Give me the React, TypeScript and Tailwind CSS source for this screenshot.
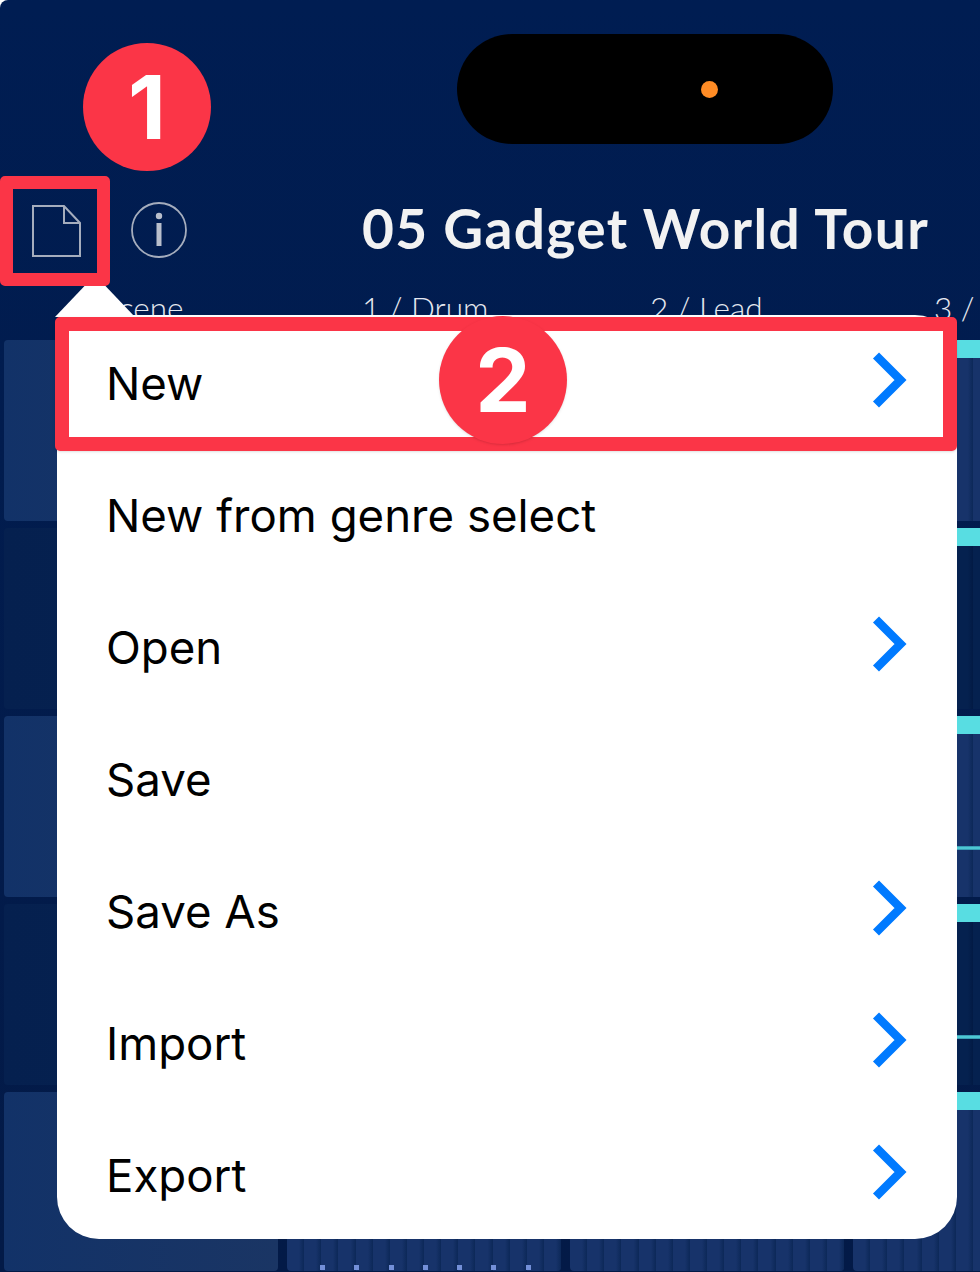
import React from "react";

const items = [
  { label: "New", arrow: true },
  { label: "New from genre select", arrow: false },
  { label: "Open", arrow: true },
  { label: "Save", arrow: false },
  { label: "Save As", arrow: true },
  { label: "Import", arrow: true },
  { label: "Export", arrow: true },
];

const stripes = Array.from({ length: 16 }, (_, i) => i);
const rows = [0, 1, 2, 3, 4];
const ticks = [0, 1, 2, 3, 4, 5, 6];

function Chevron() {
  return (
    <svg width="36" height="56" viewBox="0 0 36 56" className="mb-[5px]">
      <path d="M4 3.5 L28.5 28 L4 52.5" fill="none" stroke="#007aff" strokeWidth="8.5" />
    </svg>
  );
}

function Cell({ light, head, line, showTicks }: { light: boolean; head?: boolean; line?: number; showTicks?: boolean }) {
  return (
    <div className={`relative flex flex-col overflow-hidden rounded-[4px] ${light ? "bg-[#17336a]" : "bg-[#05214f]"}`}>
      {head && <div className="h-[18px] shrink-0 bg-[#58dde2]" />}
      <div className="flex flex-1">
        {stripes.map((s) => (
          <div
            key={s}
            className={`flex-1 bg-gradient-to-r from-transparent from-70% ${light ? "to-[#0c2858]" : "to-[#021a44]"}`}
          />
        ))}
      </div>
      {line !== undefined && (
        <div className="absolute left-0 right-0 h-[4px] bg-gradient-to-b from-[#2f8aa8] via-[#58dde2] to-[#2f8aa8]" style={{ top: line }} />
      )}
      {showTicks && (
        <div className="absolute bottom-[1px] left-0 right-0 flex h-[5px] gap-[29.3px] pl-[33px]">
          {ticks.map((t) => (
            <div key={t} className="h-[5px] w-[5px] bg-[#7490d8]" />
          ))}
        </div>
      )}
    </div>
  );
}

export default function App() {
  return (
    <div
      className="relative flex h-[1272px] w-[980px] flex-col overflow-hidden rounded-tl-lg bg-gradient-to-b from-[#001d52] to-[#031a47]"
      style={{ fontFamily: "Inter, sans-serif" }}
    >
      <header className="h-[296px] shrink-0">
        <div className="ml-[457px] mt-[34px] flex h-[110px] w-[376px] items-center rounded-full bg-black pl-[244px]">
          <div className="h-[17px] w-[17px] rounded-full bg-[#ff8c25]" />
        </div>
        <div className="mt-[58px] flex items-center">
          <svg width="51" height="54" viewBox="0 0 51 54" className="ml-[31px] mt-[2px]" fill="none" stroke="#a5adbd" strokeWidth="2">
            <path d="M2 2 H33 L49 19 V52 H2 Z" />
            <path d="M33 2 V19 H49" />
          </svg>
          <svg width="56" height="56" viewBox="0 0 56 56" className="ml-[49px]" fill="none">
            <circle cx="28" cy="28" r="27" stroke="#a5adbd" strokeWidth="1.8" />
            <circle cx="28" cy="14" r="3.2" fill="#b9bfcc" />
            <rect x="25.5" y="21" width="5" height="23" fill="#b9bfcc" />
          </svg>
          <h1
            className="-mt-[3px] ml-[175px] whitespace-nowrap text-[55px] font-bold leading-none tracking-[1.36px] text-[#f2f2f2]"
            style={{ fontFamily: "Lato, sans-serif" }}
          >
            05 Gadget World Tour
          </h1>
        </div>
      </header>

      <div
        className="-mt-[10px] mb-[10px] grid h-[44px] shrink-0 grid-cols-[287px_287px_285px_1fr] text-[31.5px] font-light leading-[44px] text-[#e6e9f0]"
        style={{ fontFamily: "Lato, sans-serif" }}
      >
        <span className="pl-[102px]">Scene</span>
        <span className="pl-[75px]">1 / Drum</span>
        <span className="pl-[76px]">2 / Lead</span>
        <span className="whitespace-nowrap pl-[75px]">3 /</span>
      </div>

      <main className="grid flex-1 grid-cols-[274px_274px_274px_274px] grid-rows-[181px_181px_181px_181px_179px] gap-x-[9px] gap-y-[7px] pl-[4px]">
        {rows.map((r) => {
          const light = r % 2 === 0;
          return (
            <React.Fragment key={r}>
              <div className={`rounded-[4px] bg-gradient-to-r ${light ? "from-[#123268] to-[#1a3564]" : "from-[#05204f] to-[#072250]"}`} />
              <Cell light={light} showTicks={r === 4} />
              <Cell light={light} />
              <Cell light={light} head line={r === 2 ? 130 : r === 3 ? 131 : undefined} />
            </React.Fragment>
          );
        })}
      </main>

      {/* popover */}
      <svg width="80" height="42" viewBox="0 0 80 42" className="absolute left-[55px] top-[275px]">
        <path d="M40 0 L80 42 H0 Z" fill="#ffffff" />
      </svg>
      <nav className="absolute left-[57px] top-[315px] flex h-[924px] w-[900px] flex-col overflow-hidden rounded-[42px] bg-white pt-[1px]">
        {items.map((it) => (
          <div key={it.label} className="flex h-[132px] shrink-0 items-center justify-between pl-[49px] pr-[49px] text-[45.6px] leading-none text-black">
            <span className="pt-[3px]">{it.label}</span>
            {it.arrow && <Chevron />}
          </div>
        ))}
      </nav>

      {/* annotations */}
      <div className="absolute left-0 top-[176px] h-[110px] w-[110px] rounded-[5px] border-[13px] border-[#fb3547]" />
      <div className="absolute left-[55px] top-[317px] h-[134px] w-[902px] rounded-[5px] border-[14px] border-[#fb3547] shadow-sm" />
      <div
        className="absolute left-[83px] top-[43px] flex h-[128px] w-[128px] items-center justify-center rounded-full bg-[#fb3547] text-[88px] font-bold leading-none text-white"
      >
        1
      </div>
      <div
        className="absolute left-[439px] top-[316px] flex h-[128px] w-[128px] items-center justify-center rounded-full bg-[#fb3547] text-[88px] font-bold leading-none text-white shadow-sm"
      >
        2
      </div>
    </div>
  );
}
